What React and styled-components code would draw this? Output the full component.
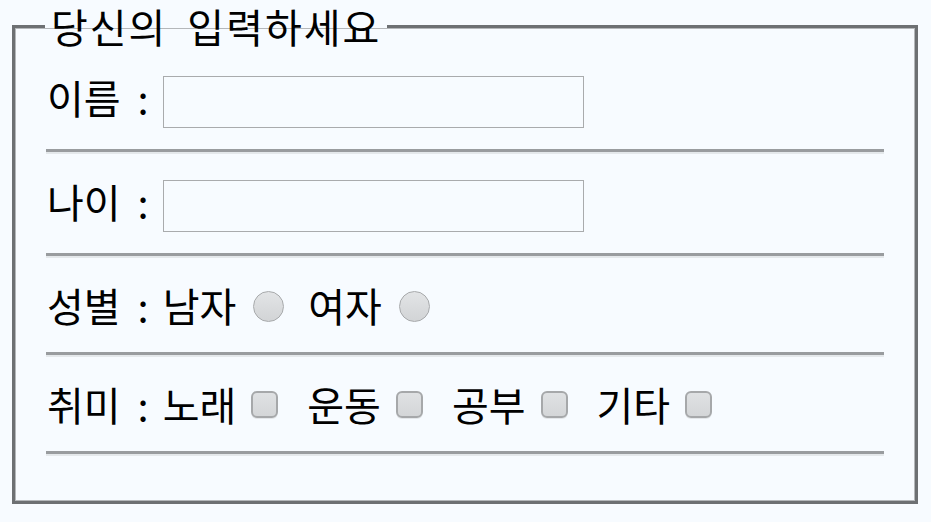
import styled, { createGlobalStyle } from "styled-components";

const GlobalStyle = createGlobalStyle`
    html, body {
        margin: 0;
        padding: 0;
        background-color: #f7fbff;
    }
    body {
        font-family: "Noto Sans CJK KR", "Noto Sans", sans-serif;
        color: #000000;
    }
`;

const HOBBIES = ["노래", "운동", "공부", "기타"];

export default function App() {
    return (
        <>
            <GlobalStyle />
            <Page>
                <Fieldset>
                    <Legend>당신의 입력하세요</Legend>
                    <InputRow $first>
                        <Label $raised>이름 :</Label>
                        <TextInput type="text" />
                    </InputRow>
                    <Divider />
                    <InputRow>
                        <Label $raised>나이 :</Label>
                        <TextInput type="text" />
                    </InputRow>
                    <Divider />
                    <ChoiceRow>
                        <Label>성별 :</Label>
                        <Word>남자</Word>
                        <Radio type="radio" name="gender" />
                        <Word>여자</Word>
                        <Radio type="radio" name="gender" $last />
                    </ChoiceRow>
                    <Divider />
                    <ChoiceRow>
                        <Label>취미 :</Label>
                        {HOBBIES.map((h, i) => (
                            <Choice key={h}>
                                <Word>{h}</Word>
                                <Checkbox type="checkbox" $last={i === HOBBIES.length - 1} />
                            </Choice>
                        ))}
                    </ChoiceRow>
                    <Divider />
                </Fieldset>
            </Page>
        </>
    );
}

const Page = styled.div`
    padding: 0 13px 0 12px;
`;

const Fieldset = styled.fieldset`
    margin: 0;
    padding: 0 31px 45px 31px;
    border: 3px solid #6d7073;
    box-shadow: inset 0 0 0 1px #b4b7ba;
    min-width: 0;
`;

const Legend = styled.legend`
    margin-left: -1px;
    padding: 0 6px 0 6px;
    font-size: 40px;
    line-height: 52px;
    letter-spacing: 2px;
    word-spacing: 9px;
`;

const InputRow = styled.div`
    display: flex;
    align-items: center;
    padding-top: ${(p) => (p.$first ? "24px" : "26px")};
    padding-bottom: 21px;
    box-sizing: border-box;
    height: ${(p) => (p.$first ? "97px" : "99px")};
`;

const ChoiceRow = styled.div`
    display: flex;
    align-items: center;
    height: 94px;
`;

const Label = styled.span`
    font-size: 40px;
    line-height: 52px;
    margin-left: 1px;
    margin-right: 14px;
    margin-bottom: ${(p) => (p.$raised ? "10px" : "0")};
    word-spacing: 8px;
    white-space: nowrap;
`;

const Word = styled.span`
    font-size: 40px;
    line-height: 52px;
    white-space: nowrap;
`;

const Choice = styled.span`
    display: flex;
    align-items: center;
`;

const TextInput = styled.input`
    width: 421px;
    height: 52px;
    box-sizing: border-box;
    border: 1px solid #a9abad;
    background: transparent;
    font-size: 30px;
    padding: 0 6px;
    outline: none;
`;

const Radio = styled.input`
    appearance: none;
    width: 31px;
    height: 31px;
    margin: 2px ${(p) => (p.$last ? "0" : "24px")} 0 17px;
    border: 1px solid #a7a9ab;
    border-radius: 50%;
    box-sizing: border-box;
    background: linear-gradient(#e2e4e6, #d2d4d6);
`;

const Checkbox = styled.input`
    appearance: none;
    width: 27px;
    height: 27px;
    margin: 0 ${(p) => (p.$last ? "0" : "29px")} 0 15px;
    border: 2px solid #a6a8aa;
    border-radius: 6px;
    box-sizing: border-box;
    background: linear-gradient(#dfe1e3, #d4d6d8);
    box-shadow: 0 1px 0 #e4e7ea;
`;

const Divider = styled.div`
    height: 5px;
    box-sizing: border-box;
    border-top: 3px solid #999c9f;
    border-bottom: 2px solid #e4e8eb;
`;
